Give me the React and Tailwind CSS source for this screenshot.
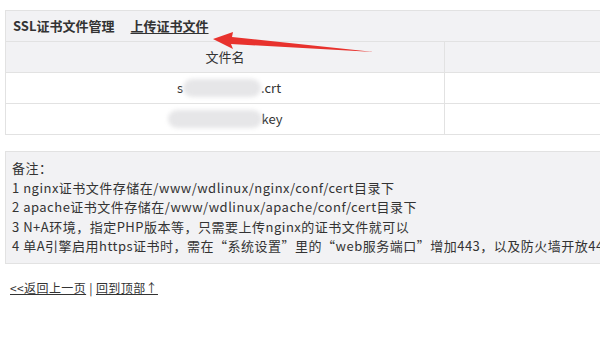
// App.jsx
const font = "font-['Noto_Sans_CJK_SC','Noto_Sans',sans-serif]";

const notes = [
  "备注：",
  "1 nginx证书文件存储在/www/wdlinux/nginx/conf/cert目录下",
  "2 apache证书文件存储在/www/wdlinux/apache/conf/cert目录下",
  "3 N+A环境，指定PHP版本等，只需要上传nginx的证书文件就可以",
  "4 单A引擎启用https证书时，需在“系统设置”里的“web服务端口”增加443，以及防火墙开放443端口",
];

// Blurred-out part of a file name
function Blur({ width }) {
  return (
    <span
      className="inline-block h-[18px] align-middle rounded-full bg-[#e6e6e8] blur-[2px]"
      style={{ width }}
    />
  );
}

function Arrow() {
  return (
    <svg
      className="absolute left-[200px] top-[16px]"
      width="175"
      height="30"
      viewBox="0 0 175 30"
    >
      <polygon
        points="7,12 27,5 26,10 168,25 25,17 27,22"
        fill="#e8322d"
      />
    </svg>
  );
}

export default function App() {
  return (
    <div className={`w-[600px] h-[347px] overflow-hidden bg-white pt-[10px] text-[#333] ${font}`}>
      {/* Certificate panel */}
      <div className="relative ml-[5px] w-[760px] border-t border-l border-[#e2e2e2]">
        <div className="h-[31px] flex items-center gap-[16px] px-[7px] bg-[#f2f2f4] border-b border-[#e2e2e2] text-[13px] font-bold">
          <span>SSL证书文件管理</span>
          <a className="underline underline-offset-2">上传证书文件</a>
        </div>
        <Arrow />
        <div className="grid grid-cols-[439px_1fr] text-[13px]">
          <div className="h-[31px] flex items-center justify-center bg-[#f2f2f4] border-b border-r border-[#e2e2e2]">
            文件名
          </div>
          <div className="h-[31px] bg-[#f2f2f4] border-b border-[#e2e2e2]" />
          <div className="h-[31px] flex items-center justify-center pl-[8px] border-b border-r border-[#e2e2e2]">
            <span>s</span>
            <Blur width={78} />
            <span>.crt</span>
          </div>
          <div className="h-[31px] border-b border-[#e2e2e2]" />
          <div className="h-[31px] flex items-center justify-center border-b border-r border-[#e2e2e2]">
            <Blur width={94} />
            <span>key</span>
          </div>
          <div className="h-[31px] border-b border-[#e2e2e2]" />
        </div>
      </div>

      {/* Notes */}
      <div className="mt-[16px] ml-[5px] w-[760px] border border-[#e2e2e2] bg-[#f2f2f4] px-[6px] pt-[6px] pb-[7px] text-[13px] leading-[19.5px] tracking-[0.5px] whitespace-nowrap">
        {notes.map((line) => (
          <div key={line}>{line}</div>
        ))}
      </div>

      {/* Footer links */}
      <div className="mt-[15px] ml-[10px] text-[12px] leading-[18px] tracking-[0.4px]">
        <a className="underline">&lt;&lt;返回上一页</a>
        <span> | </span>
        <a className="underline">回到顶部↑</a>
      </div>
    </div>
  );
}
